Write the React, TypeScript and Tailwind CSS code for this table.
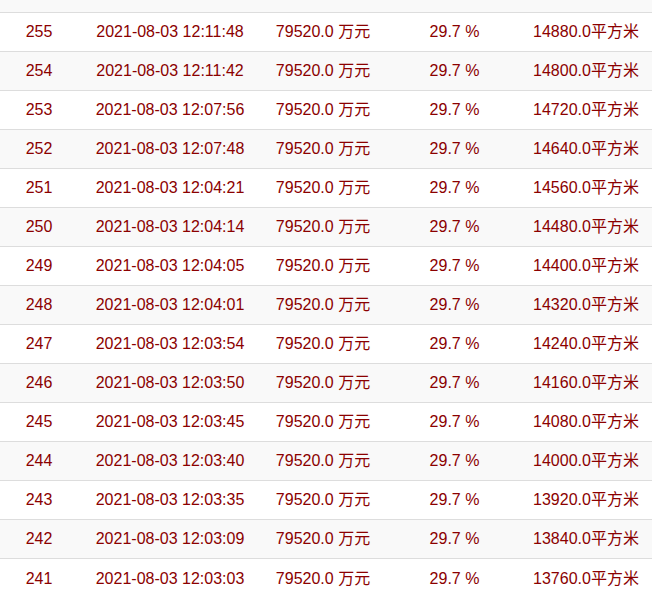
const rows = [
  { id: 255, time: "2021-08-03 12:11:48", area: "14880.0" },
  { id: 254, time: "2021-08-03 12:11:42", area: "14800.0" },
  { id: 253, time: "2021-08-03 12:07:56", area: "14720.0" },
  { id: 252, time: "2021-08-03 12:07:48", area: "14640.0" },
  { id: 251, time: "2021-08-03 12:04:21", area: "14560.0" },
  { id: 250, time: "2021-08-03 12:04:14", area: "14480.0" },
  { id: 249, time: "2021-08-03 12:04:05", area: "14400.0" },
  { id: 248, time: "2021-08-03 12:04:01", area: "14320.0" },
  { id: 247, time: "2021-08-03 12:03:54", area: "14240.0" },
  { id: 246, time: "2021-08-03 12:03:50", area: "14160.0" },
  { id: 245, time: "2021-08-03 12:03:45", area: "14080.0" },
  { id: 244, time: "2021-08-03 12:03:40", area: "14000.0" },
  { id: 243, time: "2021-08-03 12:03:35", area: "13920.0" },
  { id: 242, time: "2021-08-03 12:03:09", area: "13840.0" },
  { id: 241, time: "2021-08-03 12:03:03", area: "13760.0" },
];

export default function App() {
  return (
    <div
      className="w-[652px] h-[597px] overflow-hidden bg-white text-[16px] text-[#8b0000]"
      style={{ fontFamily: '"Liberation Sans", Arial, "Noto Sans CJK SC", sans-serif' }}
    >
      {/* cut-off previous row */}
      <div className="h-[13px] bg-[#f9f9f9] border-b border-[#dddddd]" />
      <div className="flex flex-col">
        {rows.map((row, i) => (
          <div
            key={row.id}
            className={`flex h-[39px] items-center border-b border-[#dddddd] last:border-b-0 ${i % 2 === 1 ? "bg-[#f9f9f9]" : "bg-white"}`}
          >
            <div className="w-[78px] text-center">{row.id}</div>
            <div className="w-[184px] text-center">{row.time}</div>
            <div className="w-[122px] text-center">79520.0 万元</div>
            <div className="w-[141px] text-center">29.7 %</div>
            <div className="flex-1 text-center pr-[5px]">{row.area}平方米</div>
          </div>
        ))}
      </div>
    </div>
  );
}
